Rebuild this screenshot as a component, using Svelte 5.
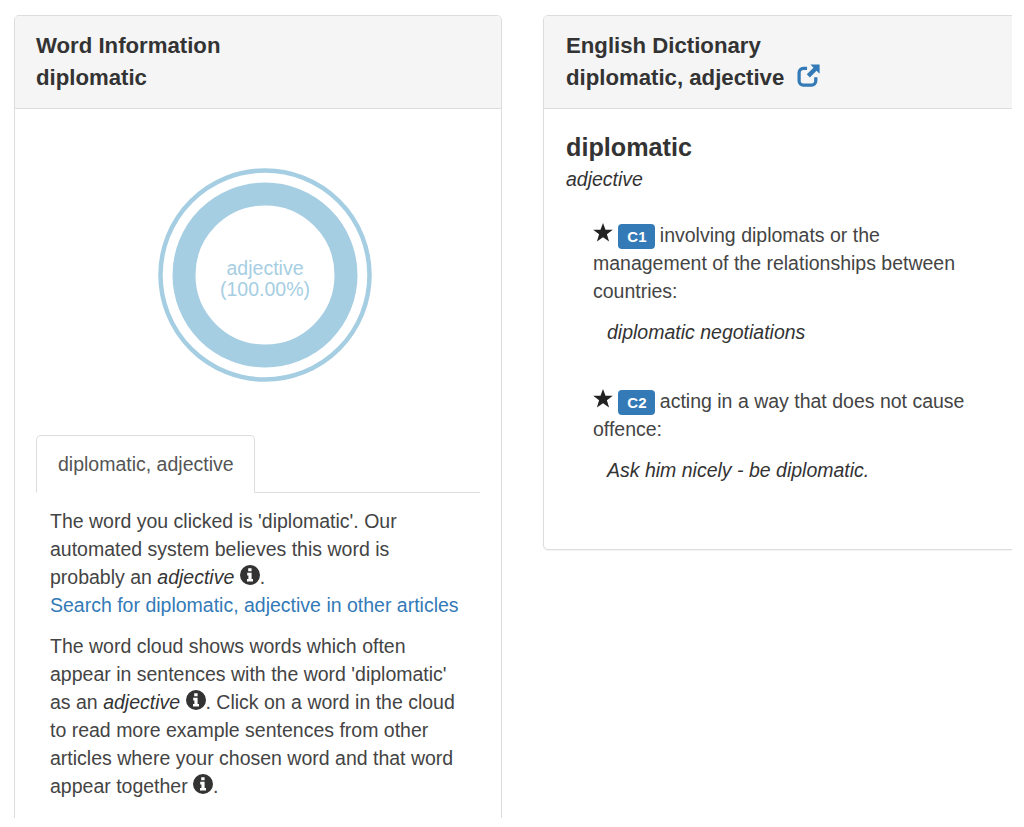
<script>
  const senses = [
    { level: 'C1', text: 'involving diplomats or the management of the relationships between countries:', example: 'diplomatic negotiations' },
    { level: 'C2', text: 'acting in a way that does not cause offence:', example: 'Ask him nicely - be diplomatic.' }
  ];
</script>

{#snippet info()}
  <svg class="info" viewBox="0 0 20 20" aria-hidden="true">
    <circle cx="10" cy="10" r="10" fill="#333" />
    <path d="M8.2 3.2h3.4v3H8.2zM7.2 7.8h4.4v6.2h1.4v2.6H7v-2.6h1.4v-3.6H7.2z" fill="#fff" />
  </svg>
{/snippet}

<div class="page">
  <div class="clip">
    <section class="panel left">
      <header class="panel-head">
        <h3>Word Information</h3>
        <h3>diplomatic</h3>
      </header>
      <div class="panel-body">
        <div class="chart">
          <svg viewBox="0 0 214 214" width="214" height="214" aria-hidden="true">
            <circle cx="107" cy="107" r="104.5" fill="none" stroke="#a6cee3" stroke-width="4.5" />
            <circle cx="107" cy="107" r="81" fill="none" stroke="#a6cee3" stroke-width="23" />
          </svg>
          <div class="chart-label">adjective<br />(100.00%)</div>
        </div>

        <div class="tabs">
          <div class="tab">diplomatic, adjective</div>
        </div>
        <div class="tab-content">
          <p>
            The word you clicked is 'diplomatic'. Our automated system believes this word is
            probably an <em>adjective</em> {@render info()}.<br />
            <a href="#search">Search for diplomatic, adjective in other articles</a>
          </p>
          <p>
            The word cloud shows words which often appear in sentences with the word 'diplomatic'
            as an <em>adjective</em> {@render info()}. Click on a word in the cloud to read more
            example sentences from other articles where your chosen word and that word appear
            together {@render info()}.
          </p>
        </div>
      </div>
    </section>

    <section class="panel right">
      <header class="panel-head">
        <h3>English Dictionary</h3>
        <h3>
          diplomatic, adjective
          <svg class="ext" viewBox="0 0 24 24" aria-hidden="true">
            <path d="M10.5 4.6H6.6a4.4 4.4 0 0 0-4.4 4.4v8.6a4.4 4.4 0 0 0 4.4 4.4h8.6a4.4 4.4 0 0 0 4.4-4.4V13.8" fill="none" stroke="#337ab7" stroke-width="3.4" />
            <path d="M14 .6h9.6v9.6l-3.2-3.2-7 7-3.2-3.2 7-7z" fill="#337ab7" />
          </svg>
        </h3>
      </header>
      <div class="panel-body dict">
        <h2>diplomatic</h2>
        <div class="pos">adjective</div>
        {#each senses as sense}
          <div class="sense">
            <p>
              <svg class="star" viewBox="0 0 20 19" aria-hidden="true">
                <path d="M10 0l2.5 6.8h7.3l-5.9 4.5 2.2 7.2L10 14.2l-6.1 4.3 2.2-7.2L.2 6.8h7.3z" fill="#222" />
              </svg>
              <span class="badge">{sense.level}</span>
              {sense.text}
            </p>
            <p class="example">{sense.example}</p>
          </div>
        {/each}
      </div>
    </section>
  </div>
</div>

<style>
  :global(body) {
    background: #fff;
  }

  .page {
    width: 1024px;
    height: 827px;
    overflow: hidden;
    font-family: "Liberation Sans", Arial, sans-serif;
    font-size: 19.5px;
    line-height: 28px;
    color: #444;
  }

  .clip {
    width: 1012px;
    height: 818px;
    padding: 15px 0 0 14px;
    box-sizing: border-box;
    overflow: hidden;
    display: flex;
    align-items: flex-start;
    gap: 41px;
  }

  .panel {
    flex: none;
    box-sizing: border-box;
    background: #fff;
    border: 1px solid #ddd;
    border-radius: 5px;
    box-shadow: 0 1px 1px rgba(0, 0, 0, 0.05);
  }

  .left {
    width: 488px;
    height: 900px;
  }

  .right {
    width: 560px;
    height: 535px;
  }

  .panel-head {
    height: 93px;
    box-sizing: border-box;
    padding: 14px 21px 0;
    background: #f5f5f5;
    border-bottom: 1px solid #ddd;
    border-radius: 4px 4px 0 0;
  }

  .right .panel-head {
    padding-left: 22px;
  }

  h3 {
    margin: 0;
    font-size: 22.2px;
    font-weight: 700;
    line-height: 32px;
    color: #333;
  }

  .ext {
    width: 23px;
    height: 23px;
    margin-left: 7px;
    vertical-align: -2px;
  }

  .panel-body {
    padding: 0 21px;
  }

  .chart {
    position: relative;
    width: 214px;
    height: 214px;
    margin: 59px 0 0 122px;
  }

  .chart svg {
    display: block;
  }

  .chart-label {
    position: absolute;
    inset: 0;
    padding-top: 8px;
    box-sizing: border-box;
    display: flex;
    align-items: center;
    justify-content: center;
    text-align: center;
    font-size: 19.5px;
    line-height: 21px;
    color: #a6cee3;
  }

  .tabs {
    margin-top: 53px;
    border-bottom: 1px solid #ddd;
    height: 58px;
    box-sizing: border-box;
    width: 444px;
  }

  .tab {
    width: 219px;
    height: 58px;
    box-sizing: border-box;
    padding: 14px 21px;
    border: 1px solid #ddd;
    border-bottom: 1px solid #fff;
    border-radius: 5px 5px 0 0;
    background: #fff;
    color: #555;
    white-space: nowrap;
  }

  .tab-content {
    padding: 14px 14px 0;
    width: 416px;
  }

  p {
    margin: 0 0 13px;
  }

  em {
    color: #333;
  }

  a {
    color: #337ab7;
    text-decoration: none;
  }

  .info {
    width: 20px;
    height: 20px;
    vertical-align: -1px;
  }

  .dict {
    padding: 21px 22px 0;
  }

  h2 {
    margin: 0;
    font-size: 25.2px;
    font-weight: 700;
    line-height: 34px;
    color: #333;
  }

  .pos {
    font-style: italic;
    color: #333;
    margin-top: 1px;
  }

  .sense {
    width: 375px;
    padding-left: 27px;
    margin-top: 28px;
  }

  .sense + .sense {
    margin-top: 41px;
  }

  .star {
    width: 20px;
    height: 19px;
    vertical-align: 0;
  }

  .badge {
    display: inline-block;
    box-sizing: border-box;
    width: 37px;
    height: 25px;
    margin: -4px -1px -4px 0;
    padding: 4px 0;
    text-align: center;
    font-size: 15px;
    font-weight: 700;
    line-height: 17px;
    color: #fff;
    background: #337ab7;
    border-radius: 4px;
    vertical-align: 0;
  }

  .example {
    margin: 13px 0 0 14px;
    font-style: italic;
    color: #333;
  }
</style>
